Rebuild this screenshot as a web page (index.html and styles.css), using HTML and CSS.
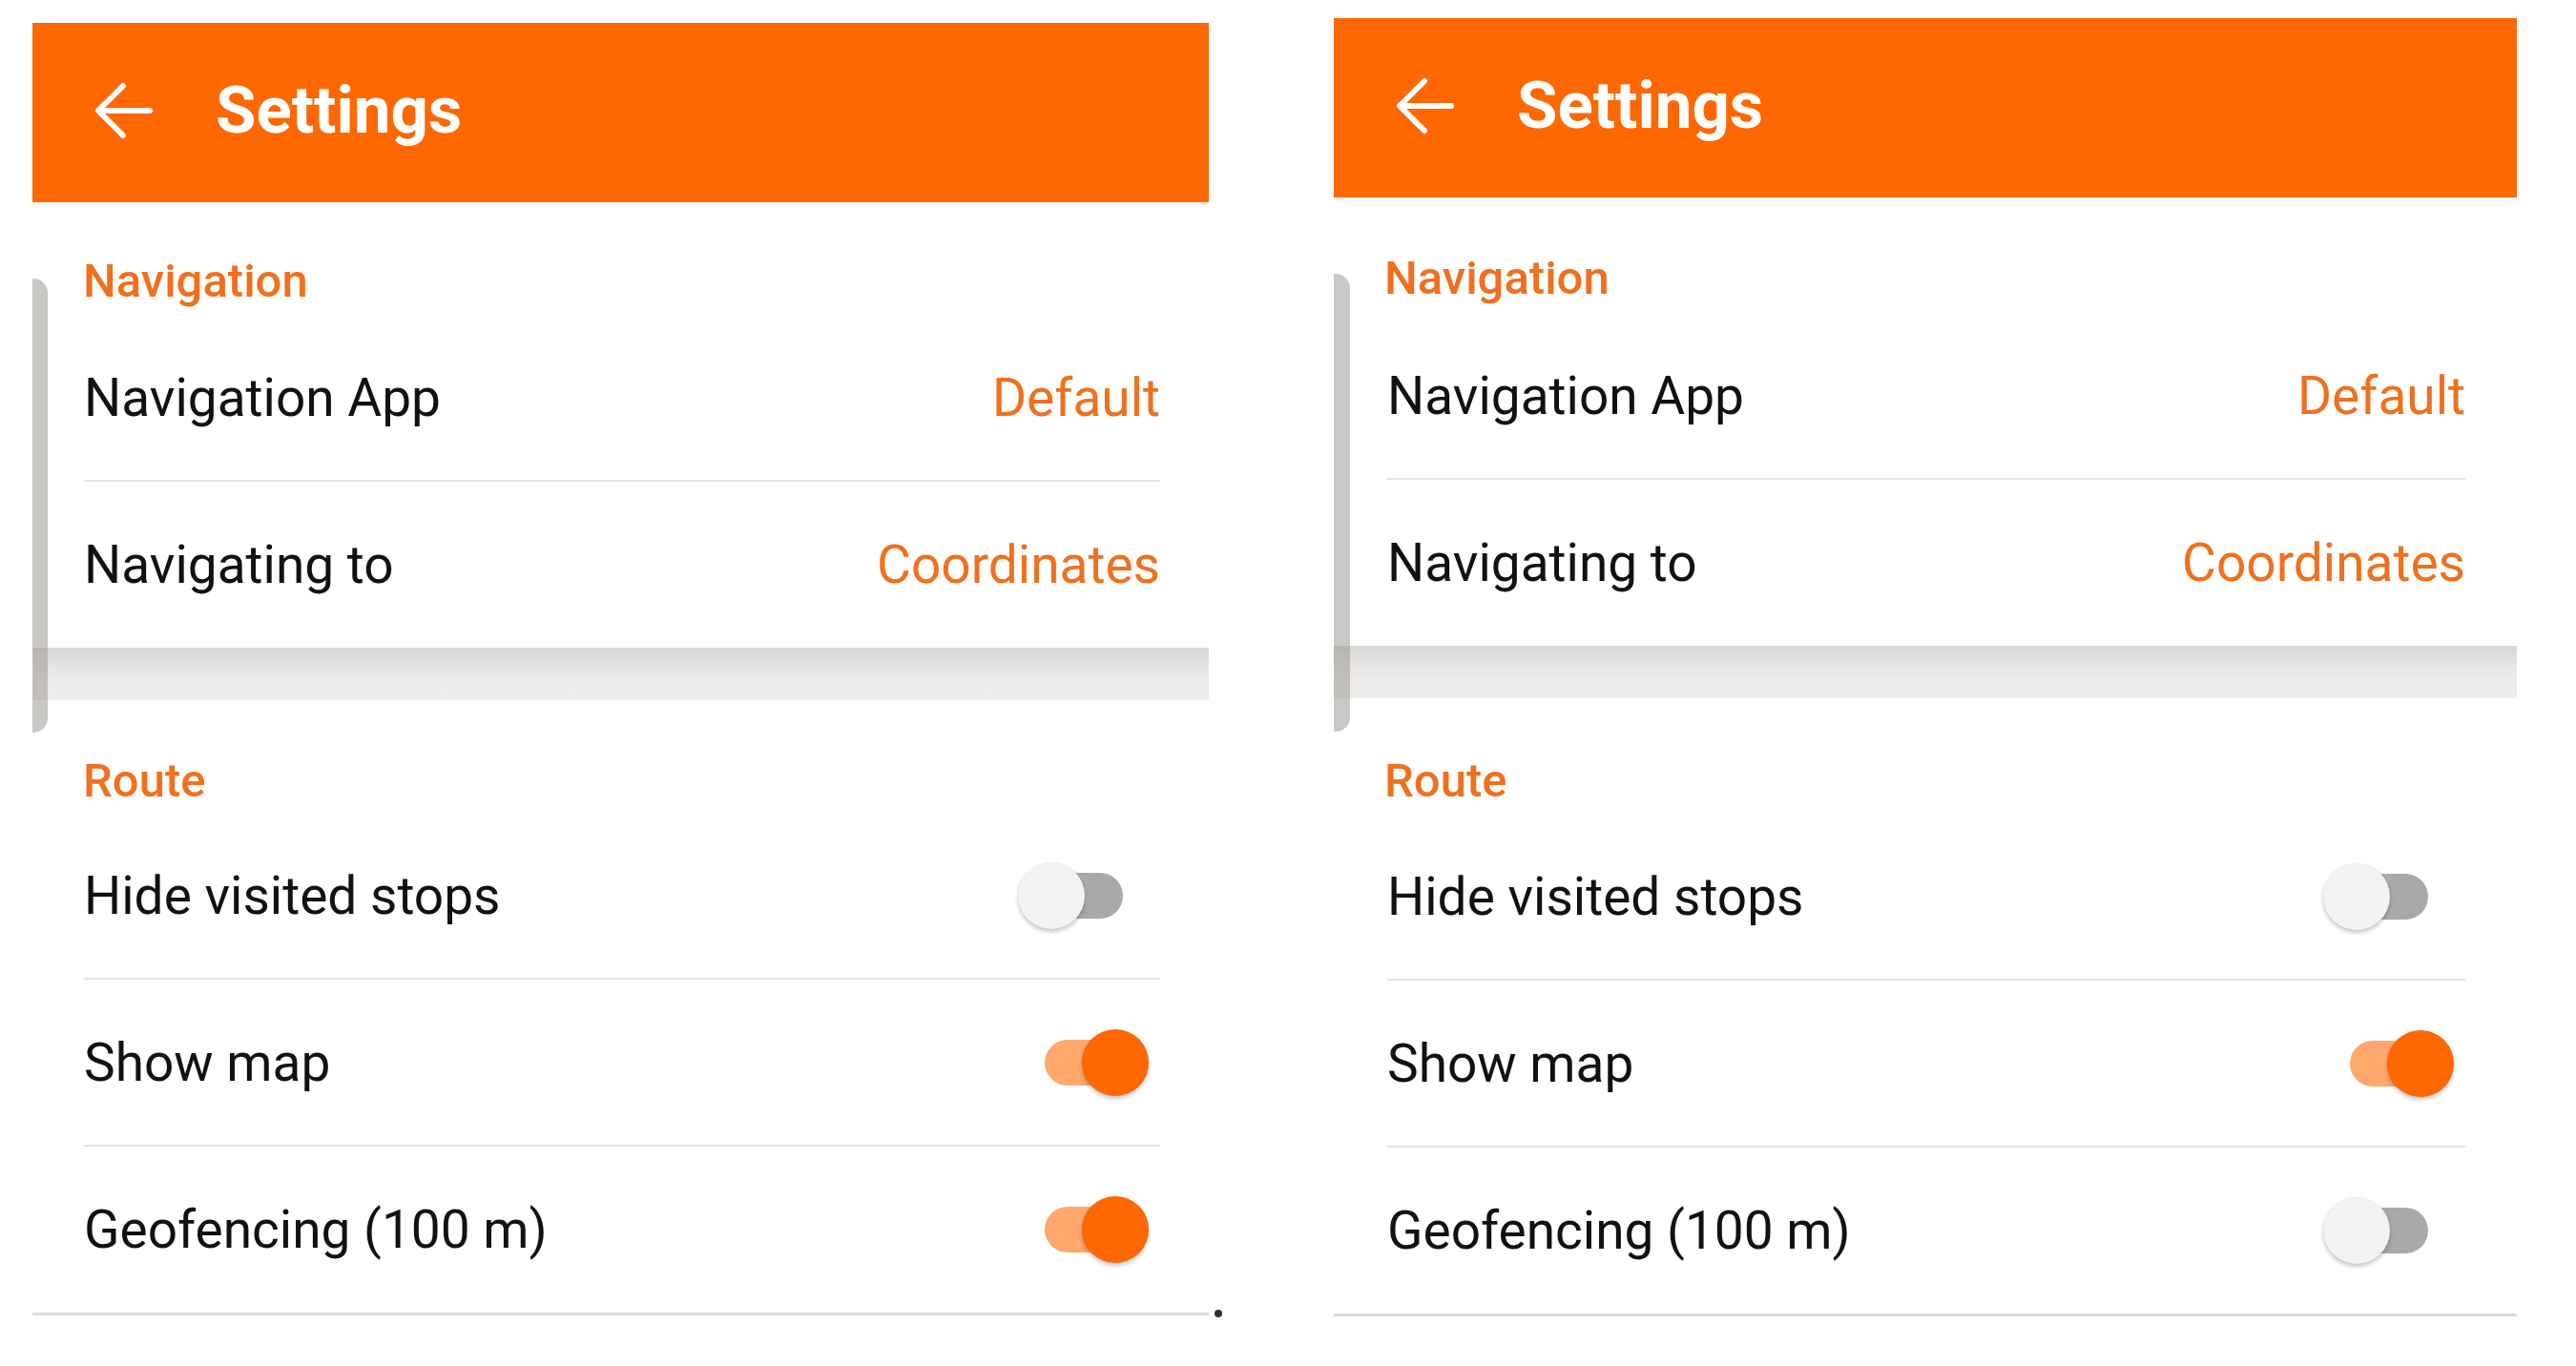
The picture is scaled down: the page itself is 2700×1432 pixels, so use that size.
FILE: index.html
```html
<!DOCTYPE html>
<html lang="en">
<head>
<meta charset="utf-8">
<title>Settings</title>
<link rel="stylesheet" href="styles.css">
</head>
<body>
<div class="screen">
  <section class="panel panel-a">
    <header class="appbar">
      <svg class="back" viewBox="0 0 60 60" width="60" height="60" aria-hidden="true"><path d="M57 30H4M29 4L3 30l26 26"/></svg>
      <h1 class="title">Settings</h1>
    </header>
    <div class="group">
      <h2 class="group-title group-title-nav">Navigation</h2>
      <div class="row"><span class="label">Navigation App</span><span class="value">Default</span></div>
      <div class="row row-end"><span class="label">Navigating to</span><span class="value">Coordinates</span></div>
    </div>
    <div class="band"></div>
    <div class="group">
      <h2 class="group-title group-title-route">Route</h2>
      <div class="row"><span class="label">Hide visited stops</span><span class="switch"><span class="track"></span><span class="thumb"></span></span></div>
      <div class="row"><span class="label">Show map</span><span class="switch on"><span class="track"></span><span class="thumb"></span></span></div>
      <div class="row row-end"><span class="label">Geofencing (100 m)</span><span class="switch on"><span class="track"></span><span class="thumb"></span></span></div>
    </div>
    <div class="bottom-line with-dot"></div>
    <div class="scroll-edge"></div>
  </section>

  <section class="panel panel-b">
    <header class="appbar">
      <svg class="back" viewBox="0 0 60 60" width="60" height="60" aria-hidden="true"><path d="M57 30H4M29 4L3 30l26 26"/></svg>
      <h1 class="title">Settings</h1>
    </header>
    <div class="group">
      <h2 class="group-title group-title-nav">Navigation</h2>
      <div class="row"><span class="label">Navigation App</span><span class="value">Default</span></div>
      <div class="row row-end"><span class="label">Navigating to</span><span class="value">Coordinates</span></div>
    </div>
    <div class="band"></div>
    <div class="group">
      <h2 class="group-title group-title-route">Route</h2>
      <div class="row"><span class="label">Hide visited stops</span><span class="switch"><span class="track"></span><span class="thumb"></span></span></div>
      <div class="row"><span class="label">Show map</span><span class="switch on"><span class="track"></span><span class="thumb"></span></span></div>
      <div class="row row-end"><span class="label">Geofencing (100 m)</span><span class="switch"><span class="track"></span><span class="thumb"></span></span></div>
    </div>
    <div class="bottom-line"></div>
    <div class="scroll-edge"></div>
  </section>
</div>
</body>
</html>
```

FILE: styles.css
```css
html, body {
  margin: 0;
  padding: 0;
  background: #ffffff;
}

body {
  font-family: Roboto, "Liberation Sans", Arial, sans-serif;
  color: #111111;
}

.screen {
  display: flex;
  align-items: flex-start;
  width: 2700px;
  height: 1432px;
  overflow: hidden;
}

.panel {
  position: relative;
  display: flex;
  flex-direction: column;
  background: #ffffff;
}

.panel-a {
  width: 1233px;
  margin-left: 34px;
  margin-top: 24px;
}

.panel-b {
  width: 1240px;
  margin-left: 131px;
  margin-top: 19px;
}

/* App bar */
.appbar {
  display: flex;
  align-items: center;
  height: 188px;
  padding-bottom: 4px;
  box-sizing: border-box;
  background: #ff6700;
  box-shadow: 0 3px 8px rgba(0, 0, 0, 0.05);
  position: relative;
  z-index: 1;
}

.back {
  margin-left: 66px;
  flex: none;
  fill: none;
  stroke: #ffffff;
  stroke-width: 6;
  stroke-linecap: round;
  stroke-linejoin: round;
}

.title {
  margin: 0 0 0 66px;
  font-size: 69px;
  font-weight: 700;
  color: #ffffff;
  line-height: 80px;
}

/* Groups */
.group {
  display: flex;
  flex-direction: column;
}

.group-title {
  margin: 0;
  height: 118px;
  box-sizing: border-box;
  padding: 55px 0 0 53px;
  font-size: 49px;
  line-height: 56px;
  font-weight: 500;
  color: #f0701e;
}

.group-title-route {
  padding-top: 57px;
}

.panel-b .group-title-nav {
  height: 121px;
  padding-top: 57px;
}

.panel-b .group-title-route {
  height: 121px;
  padding-top: 59px;
}

.row {
  display: flex;
  align-items: center;
  justify-content: space-between;
  height: 175px;
  box-sizing: border-box;
  margin: 0 51px 0 54px;
  border-bottom: 2px solid #e4e4e4;
}

.panel-b .row {
  margin: 0 54px 0 56px;
}

.row-end {
  border-bottom: none;
  height: 174px;
}

.label {
  font-size: 55px;
  line-height: 64px;
  font-weight: 400;
  color: #111111;
}

.value {
  font-size: 55px;
  line-height: 64px;
  font-weight: 400;
  color: #f0701e;
}

/* Separator band */
.band {
  height: 55px;
  background: linear-gradient(to bottom, #d9d7d5 0%, #e6e4e2 35%, #eeecea 65%, #eeedeb 100%);
}

.bottom-line {
  position: relative;
  height: 3px;
  background: #dcdad8;
}

.with-dot::after {
  content: "";
  position: absolute;
  right: -14px;
  top: -3px;
  width: 8px;
  height: 8px;
  border-radius: 50%;
  background: #2e2e2e;
}

/* Overscroll edge on the left */
.scroll-edge {
  position: absolute;
  left: 0;
  top: 268px;
  width: 16px;
  height: 476px;
  border-radius: 0 15px 15px 0;
  background: rgba(150, 145, 140, 0.5);
  z-index: 2;
}

.panel-b .scroll-edge {
  top: 268px;
  width: 17px;
  height: 480px;
}

/* Switches */
.switch {
  position: relative;
  flex: none;
  width: 137px;
  height: 72px;
  margin-right: 12px;
}

.track {
  position: absolute;
  left: 28px;
  top: 12px;
  width: 82px;
  height: 48px;
  border-radius: 24px;
  background: #a9a9a9;
}

.thumb {
  position: absolute;
  left: 0;
  top: 1px;
  width: 70px;
  height: 70px;
  border-radius: 50%;
  background: #f3f3f3;
  box-shadow: 0 3px 4px rgba(0, 0, 0, 0.22), 0 0 1px rgba(0, 0, 0, 0.12);
}

.switch.on .track {
  background: #ffa76c;
}

.switch.on .thumb {
  left: auto;
  right: 0;
  background: #ff6700;
}
```
